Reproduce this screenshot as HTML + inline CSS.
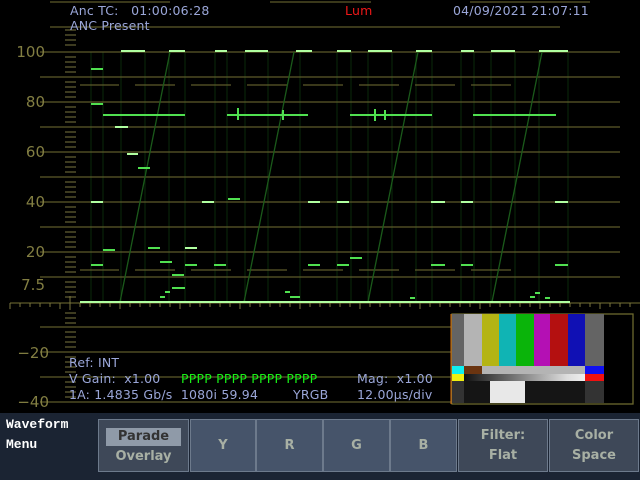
<!DOCTYPE html>
<html><head><meta charset="utf-8"><style>
html,body{margin:0;padding:0;background:#000;width:640px;height:480px;overflow:hidden;font-family:"DejaVu Sans","Liberation Sans",sans-serif}
.t{position:absolute;color:#9aa6d8;font-size:12.5px;white-space:nowrap;letter-spacing:0.2px}
.lab{position:absolute;color:#827e42;font-size:15px;text-align:right;width:41px}
.menu{position:absolute;left:0;top:413px;width:640px;height:67px;background:#1b2433}
.b{position:absolute;top:419px;height:53px;background:#46546a;border:1px solid #6d7a8c;box-sizing:border-box;color:#a8b0a4;font-size:13px;text-align:center;font-weight:bold}
</style></head><body>
<svg width="640" height="480" style="position:absolute;left:0;top:0">
<g stroke="#0a2a0a" stroke-width="1">
<path d="M91 52V302M103 52V302M121 52V302M145 52V302M169 52V302M185 52V302M215 52V302M227 52V302M245 52V302M268 52V302M300 52V302M337 52V302M351 52V302M368 52V302M392 52V302M416 52V302M432 52V302M461 52V302M474 52V302M491 52V302M515 52V302M539 52V302M568 52V302"/>
</g>
<g stroke="#5e5a2a" stroke-width="1.2">
<line x1="50" y1="2" x2="170" y2="2"/><line x1="270" y1="2" x2="371" y2="2"/><line x1="470" y1="2" x2="590" y2="2"/>
<line x1="50" y1="27" x2="560" y2="27"/>
<line x1="40" y1="52" x2="620" y2="52"/><line x1="40" y1="77" x2="620" y2="77"/><line x1="40" y1="102" x2="620" y2="102"/>
<line x1="40" y1="127" x2="620" y2="127"/><line x1="40" y1="152" x2="620" y2="152"/><line x1="40" y1="177" x2="620" y2="177"/>
<line x1="40" y1="202" x2="620" y2="202"/><line x1="40" y1="227" x2="620" y2="227"/><line x1="40" y1="252" x2="620" y2="252"/>
<line x1="40" y1="277" x2="620" y2="277"/>
<line x1="40" y1="327" x2="452" y2="327"/><line x1="40" y1="352" x2="452" y2="352"/><line x1="40" y1="377" x2="452" y2="377"/><line x1="40" y1="402" x2="452" y2="402"/>
<line x1="80" y1="85" x2="119" y2="85"/><line x1="135" y1="85" x2="175" y2="85"/><line x1="191" y1="85" x2="231" y2="85"/><line x1="247" y1="85" x2="287" y2="85"/><line x1="303" y1="85" x2="343" y2="85"/><line x1="359" y1="85" x2="399" y2="85"/><line x1="415" y1="85" x2="455" y2="85"/><line x1="471" y1="85" x2="511" y2="85"/>
<line x1="80" y1="270" x2="119" y2="270"/><line x1="135" y1="270" x2="175" y2="270"/><line x1="191" y1="270" x2="231" y2="270"/><line x1="247" y1="270" x2="287" y2="270"/><line x1="303" y1="270" x2="343" y2="270"/><line x1="359" y1="270" x2="399" y2="270"/><line x1="415" y1="270" x2="455" y2="270"/><line x1="471" y1="270" x2="511" y2="270"/>
<line x1="10" y1="303" x2="640" y2="303"/>
</g>
<g stroke="#7a7640" stroke-width="1">
<path d="M65 30H76M65 35H76M65 40H76M65 45H76M65 57H76M65 62H76M65 67H76M65 72H76M65 82H76M65 87H76M65 92H76M65 97H76M65 107H76M65 112H76M65 117H76M65 122H76M65 132H76M65 137H76M65 142H76M65 147H76M65 157H76M65 162H76M65 167H76M65 172H76M65 182H76M65 187H76M65 192H76M65 197H76M65 207H76M65 212H76M65 217H76M65 222H76M65 232H76M65 237H76M65 242H76M65 247H76M65 257H76M65 262H76M65 267H76M65 272H76M65 282H76M65 287H76M65 292H76M65 297H76M65 313H76M65 318H76M65 323H76M65 332H76M65 337H76M65 342H76M65 347H76M65 357H76M65 362H76M65 367H76M65 372H76M65 382H76M65 387H76M65 392H76M65 397H76M70 296V310"/>
<path d="M10 303v6M20 303v4M30 303v4M40 303v4M50 303v4M60 303v6M70 303v4M80 303v4M90 303v4M100 303v4M110 303v4M120 303v6M130 303v4M140 303v4M150 303v4M160 303v4M170 303v4M180 303v6M190 303v4M200 303v4M210 303v4M220 303v4M230 303v4M240 303v6M250 303v4M260 303v4M270 303v4M280 303v4M290 303v4M300 303v6M310 303v4M320 303v4M330 303v4M340 303v4M350 303v4M360 303v6M370 303v4M380 303v4M390 303v4M400 303v4M410 303v4M420 303v6M430 303v4M440 303v4M450 303v4M460 303v4M470 303v4M480 303v6M490 303v4M500 303v4M510 303v4M520 303v4M530 303v4M540 303v6M550 303v4M560 303v4M570 303v4M580 303v4M590 303v4M600 303v6M610 303v4M620 303v4M630 303v4"/>
</g>
<g stroke="#1a5a1a" stroke-width="1.3">
<line x1="120" y1="302" x2="170" y2="52"/><line x1="244" y1="302" x2="294" y2="52"/><line x1="368" y1="302" x2="418" y2="52"/><line x1="492" y1="302" x2="542" y2="52"/>
</g>
<g stroke="#b0ffa0" stroke-width="2">
<path d="M121 51H145M169 51H185M215 51H227M245 51H268M296 51H312M337 51H351M368 51H392M416 51H432M461 51H474M491 51H515M539 51H568"/>
<path d="M115 127H128M127 154H138M91 202H103M185 248H197M202 202H214M308 202H320M337 202H349M431 202H445M555 202H568M461 202H473M80 302H570"/>
</g>
<g stroke="#50e050" stroke-width="2">
<path d="M103 115H185M227 115H308M350 115H432M473 115H556"/>
<path d="M91 69H103M91 104H103M138 168H150M103 250H115M91 265H103M148 248H160M160 262H172M172 275H184M185 265H197M228 199H240M214 265H226M308 265H320M350 258H362M337 265H349M431 265H445M555 265H568M461 265H473"/>
<path d="M160 297H165M165 292H170M172 288H185M290 297H300M285 292H290M410 298H415M530 297H535M535 293H540M545 298H550"/>
<path d="M238 108V120M283 110V120M375 109V121M385 110V120"/>
</g>
<rect x="452" y="314" width="181" height="90" fill="none" stroke="#6c682e" stroke-width="1.3"/>
<rect x="452" y="314" width="12" height="52" fill="#646464"/>
<rect x="464" y="314" width="18" height="52" fill="#b4b4b4"/>
<rect x="482" y="314" width="17" height="52" fill="#b4b414"/>
<rect x="499" y="314" width="17" height="52" fill="#10b4b4"/>
<rect x="516" y="314" width="18" height="52" fill="#0ab40a"/>
<rect x="534" y="314" width="16" height="52" fill="#b410b4"/>
<rect x="550" y="314" width="18" height="52" fill="#b41010"/>
<rect x="568" y="314" width="17" height="52" fill="#1010b4"/>
<rect x="585" y="314" width="19" height="52" fill="#646464"/>
<rect x="452" y="366" width="12" height="8" fill="#10f0f0"/>
<rect x="464" y="366" width="18" height="8" fill="#6a3410"/>
<rect x="482" y="366" width="103" height="8" fill="#b4b4b4"/>
<rect x="585" y="366" width="19" height="8" fill="#1010f0"/>
<rect x="452" y="374" width="12" height="7" fill="#f0f010"/>
<defs><linearGradient id="g"><stop offset="0" stop-color="#111"/><stop offset="0.85" stop-color="#ddd"/><stop offset="1" stop-color="#eee"/></linearGradient></defs>
<rect x="464" y="374" width="121" height="7" fill="url(#g)"/>
<rect x="585" y="374" width="19" height="7" fill="#f01010"/>
<rect x="452" y="381" width="12" height="22" fill="#333"/>
<rect x="464" y="381" width="26" height="22" fill="#151515"/>
<rect x="490" y="381" width="35" height="22" fill="#e8e8e8"/>
<rect x="525" y="381" width="60" height="22" fill="#151515"/>
<rect x="585" y="381" width="19" height="22" fill="#333"/>
<line x1="451" y1="314" x2="451" y2="404" stroke="#e07010" stroke-width="1"/>
</svg>
<div class="lab" style="left:4px;top:43px">100</div>
<div class="lab" style="left:4px;top:93px">80</div>
<div class="lab" style="left:4px;top:143px">60</div>
<div class="lab" style="left:4px;top:193px">40</div>
<div class="lab" style="left:4px;top:243px">20</div>
<div class="lab" style="left:4px;top:276px">7.5</div>
<div class="lab" style="left:8px;top:344px">−20</div>
<div class="lab" style="left:8px;top:393px">−40</div>
<div class="t" style="left:70px;top:3px">Anc TC:&nbsp;&nbsp;&nbsp;01:00:06:28</div>
<div class="t" style="left:70px;top:18px">ANC Present</div>
<div class="t" style="left:345px;top:3px;color:#f01818">Lum</div>
<div class="t" style="left:453px;top:3px">04/09/2021 21:07:11</div>
<div class="t" style="left:69px;top:355px">Ref: INT</div>
<div class="t" style="left:69px;top:371px">V Gain:&nbsp; x1.00</div>
<div class="t" style="left:181px;top:371px;color:#18f018">PPPP PPPP PPPP PPPP</div>
<div class="t" style="left:357px;top:371px">Mag:&nbsp; x1.00</div>
<div class="t" style="left:69px;top:387px">1A: 1.4835 Gb/s&nbsp; 1080i 59.94</div>
<div class="t" style="left:293px;top:387px">YRGB</div>
<div class="t" style="left:357px;top:387px">12.00µs/div</div>
<div class="menu"></div>
<div style="position:absolute;left:6px;top:415px;color:#fff;font-size:13px;font-weight:bold;line-height:20px;font-family:'Liberation Mono',monospace">Waveform<br>Menu</div>
<div class="b" style="left:98px;width:91px;background:#3e4858"><div style="margin:8px 7px 0;background:#8f9aa8;color:#333;height:18px;line-height:18px">Parade</div><div style="line-height:22px">Overlay</div></div>
<div class="b" style="left:190px;width:66px;line-height:51px">Y</div>
<div class="b" style="left:256px;width:67px;line-height:51px">R</div>
<div class="b" style="left:323px;width:67px;line-height:51px">G</div>
<div class="b" style="left:390px;width:67px;line-height:51px">B</div>
<div class="b" style="left:458px;width:90px;background:#3e4858;line-height:20px;padding-top:6px">Filter:<br>Flat</div>
<div class="b" style="left:549px;width:90px;background:#3e4858;line-height:20px;padding-top:6px">Color<br>Space</div>
</body></html>
